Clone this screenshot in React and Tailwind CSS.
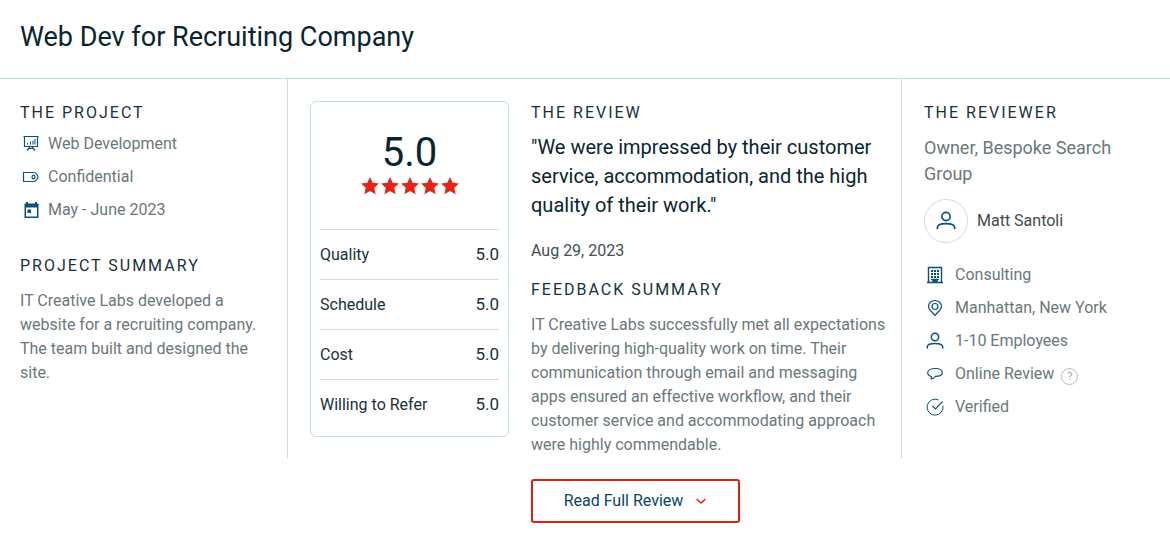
import React from 'react';

const projectDetails = [
    { label: 'Web Development', icon: 'board' },
    { label: 'Confidential', icon: 'tag' },
    { label: 'May - June 2023', icon: 'calendar' },
];

const scores = [
    { label: 'Quality', value: '5.0' },
    { label: 'Schedule', value: '5.0' },
    { label: 'Cost', value: '5.0' },
    { label: 'Willing to Refer', value: '5.0' },
];

const reviewerDetails = [
    { label: 'Consulting', icon: 'building' },
    { label: 'Manhattan, New York', icon: 'pin' },
    { label: '1-10 Employees', icon: 'person' },
    { label: 'Online Review', icon: 'chat', help: true },
    { label: 'Verified', icon: 'check' },
];

const paths = {
    board: (
        <>
            <path d="M2.500 1.500h13v10h-13z" />
            <path d="M5.500 8v1.500M8.500 6.500v3M11 5.500v4M13 4v5.500" strokeWidth="1" />
            <path d="M1.500 1.500h15M8 12l-3 3.500M10 12l3 3.500M6.500 13.500h5" />
        </>
    ),
    tag: (
        <>
            <path d="M1.500 4.500h10.500c1.500 0 4 2.700 4 4.500s-2.500 4.500-4 4.500H1.500z" strokeLinejoin="round" />
            <ellipse cx="11.500" cy="9" rx="1.500" ry="1.900" />
        </>
    ),
    calendar: (
        <path
            fill="currentColor"
            stroke="none"
            fillRule="evenodd"
            d="M4 1h2v1.500h7V1h2v1.500h1.500V17h-14V2.500H4zM4 6.500v9h11v-9zM5.500 8.500H9V12H5.500z"
        />
    ),
    building: (
        <>
            <path d="M2.500 1.500h13v15h-13zM1 16.500h16" strokeWidth="1.400" />
            <path d="M6 4v10M9 4v8M12 4v10" strokeWidth="2" strokeDasharray="2 1" />
            <path d="M7 16v-2.500h4V16" strokeWidth="1.400" fill="currentColor" />
        </>
    ),
    pin: (
        <>
            <path d="M9 16.500C6.500 12.800 2.500 11 2.500 7.500a6.500 6 0 0 1 13 0C15.500 11 11.500 12.800 9 16.500z" />
            <circle cx="9" cy="7.500" r="3" />
        </>
    ),
    person: (
        <>
            <circle cx="9" cy="5" r="3.700" strokeWidth="1.500" />
            <path d="M1.200 16.500v-1.500c0-2.300 1.600-3.600 7.800-3.600s7.800 1.300 7.800 3.600v1.500" strokeWidth="1.500" />
        </>
    ),
    chat: (
        <path
            d="M5.500 11.500C3.200 11 1.700 9.600 1.700 7.800c0-2.600 3.200-4.300 7.300-4.300s7.300 1.500 7.300 3.900c0 2.300-2.900 3.800-6.800 3.900-1 1.600-2.500 2.500-4.500 2.700.6-.7.800-1.500.5-2.500z"
            strokeLinejoin="round"
        />
    ),
    check: (
        <>
            <path d="M12.500 1.900A8 8 0 1 0 16.900 7.500" strokeWidth="1" />
            <path d="m6.500 8 3 3 7-7.500" />
        </>
    ),
};

const Icon = ({ name, className = 'w-[18px] h-[18px]' }) => (
    <svg viewBox="0 0 18 18" className={`shrink-0 text-[#08537e] ${className}`} fill="none" stroke="currentColor" strokeWidth="1.200" aria-hidden="true">
        {paths[name]}
    </svg>
);

const Heading = ({ children }) => (
    <h2 className="text-base leading-6 tracking-[2px] uppercase text-[#17313b]">{children}</h2>
);

const DetailList = ({ items, rowClass }) => (
    <ul className="space-y-[9px]">
        {items.map((item) => (
            <li key={item.label} className={`flex items-center leading-6 text-[#6a787c] ${rowClass}`}>
                <Icon name={item.icon} />
                <span>{item.label}</span>
                {item.help && (
                    <button type="button" aria-label="About online reviews" className="-ml-1 mt-1 w-[17px] h-[17px] rounded-full border border-[#b5bbbd] text-[11px] leading-none text-[#9da5a8] flex items-center justify-center">
                        ?
                    </button>
                )}
            </li>
        ))}
    </ul>
);

const Star = () => (
    <svg viewBox="0 0 20 20" className="w-5 h-5" fill="#e62415" aria-hidden="true">
        <path d="m10 1 2.700 5.700 6.300.8-4.700 4.300 1.300 6.400-5.600-3.200-5.600 3.200 1.300-6.400L1 7.500l6.300-.8z" />
    </svg>
);

const App = () => {
    return (
        <article className="bg-white font-['Roboto',sans-serif] text-base text-[#17313b]">
            <header className="border-b border-[#bddde5] px-5 pt-[19px] pb-[23px]">
                <h1 className="text-[27px] leading-9 text-[#08252f]">Web Dev for Recruiting Company</h1>
            </header>

            <div className="grid grid-cols-[288fr_243fr_371fr_268fr]">
                {/* Project */}
                <section className="border-r border-[#c9dde3] pl-5 pr-5 pt-[22px]">
                    <Heading>The Project</Heading>
                    <div className="mt-[7px]">
                        <DetailList items={projectDetails} rowClass="gap-2 pl-[2px]" />
                    </div>
                    <div className="mt-8">
                        <Heading>Project Summary</Heading>
                    </div>
                    <p className="mt-[11px] leading-6 text-[#6a787c]">
                        IT Creative Labs developed a website for a recruiting company. The team built and designed the site.
                    </p>
                </section>

                {/* Scores */}
                <section className="pl-[22px] pr-[22px] pt-[22px]">
                    <div className="rounded-md border border-[#bddde5] px-[9px] pb-[7px]">
                        <div className="flex flex-col items-center pt-7 pb-[33px]">
                            <span className="text-[40px] leading-[46px] text-[#08252f]">5.0</span>
                            <div className="flex" role="img" aria-label="5 out of 5 stars">
                                {[1, 2, 3, 4, 5].map((n) => <Star key={n} />)}
                            </div>
                        </div>
                        <dl>
                            {scores.map((score) => (
                                <div key={score.label} className="flex items-center justify-between border-t border-[#c9e0e7] h-[50px]">
                                    <dt>{score.label}</dt>
                                    <dd className="text-[17px]">{score.value}</dd>
                                </div>
                            ))}
                        </dl>
                    </div>
                </section>

                {/* Review */}
                <section className="border-r border-[#c9dde3] pr-3 pt-[22px] pb-[1px]">
                    <Heading>The Review</Heading>
                    <blockquote className="mt-2 text-xl leading-[29px] text-[#08252f]">
                        "We were impressed by their customer service, accommodation, and the high quality of their work."
                    </blockquote>
                    <p className="mt-[19px] leading-6 text-[#414f54]">Aug 29, 2023</p>
                    <div className="mt-[15px]">
                        <Heading>Feedback Summary</Heading>
                    </div>
                    <p className="mt-[11px] leading-6 text-[#6a787c]">
                        IT Creative Labs successfully met all expectations by delivering high-quality work on time. Their communication through email and messaging apps ensured an effective workflow, and their customer service and accommodating approach were highly commendable.
                    </p>
                </section>

                {/* Reviewer */}
                <section className="pl-[22px] pr-8 pt-[22px]">
                    <Heading>The Reviewer</Heading>
                    <p className="mt-[10px] text-lg leading-[26px] text-[#6a787c]">Owner, Bespoke Search Group</p>
                    <div className="mt-3 mb-5 flex items-center gap-[9px]">
                        <div className="flex w-11 h-11 items-center justify-center rounded-full border border-[#c9e0e7]">
                            <Icon name="person" className="w-5 h-5" />
                        </div>
                        <span className="text-[#414b4f]">Matt Santoli</span>
                    </div>
                    <DetailList items={reviewerDetails} rowClass="gap-[11px] pl-[2px]" />
                </section>

                <div className="col-start-3 pt-[21px] pb-5">
                    <button type="button" className="flex h-11 w-[209px] items-center justify-center gap-3 rounded-[3px] border-2 border-[#e0200f] text-[#08466b]">
                        Read Full Review
                        <svg viewBox="0 0 12 12" className="w-3 h-3" fill="none" stroke="#e62415" strokeWidth="1.500" aria-hidden="true">
                            <path d="m1.500 4 4.500 4 4.500-4" />
                        </svg>
                    </button>
                </div>
            </div>
        </article>
    );
};

export default App;
